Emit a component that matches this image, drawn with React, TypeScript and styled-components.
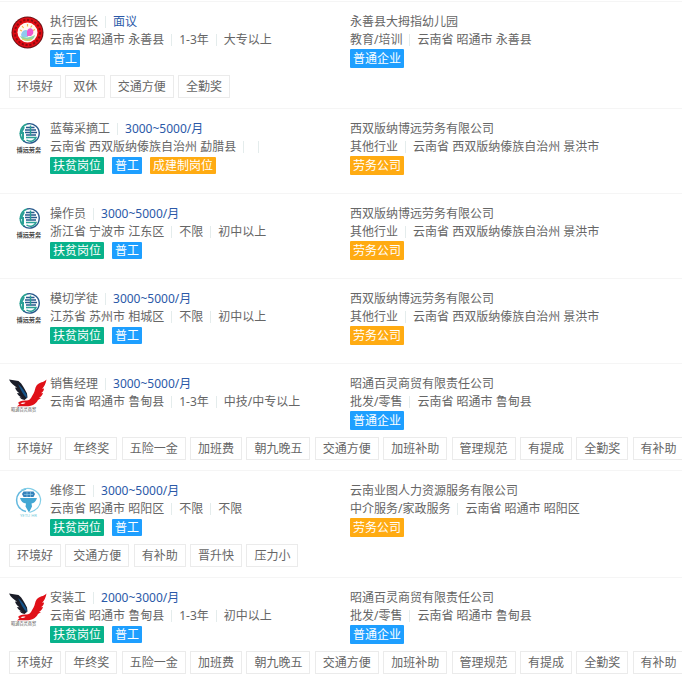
import React from "react";
import styled, { createGlobalStyle } from "styled-components";

type TagKind = "support" | "basic" | "agency";
type LogoKind = "kindergarten" | "boyuan" | "bailing" | "yetu";

interface TagData {
  label: string;
  kind: TagKind;
}

interface Job {
  logo: LogoKind;
  title: string;
  salary: string;
  facts: string[];
  tags: TagData[];
  company: string;
  companyFacts: string[];
  companyTag: TagData;
  benefits: string[];
}

const tagColors: Record<TagKind, string> = {
  support: "#08b28b",
  basic: "#1e9fff",
  agency: "#ffab12",
};

const GlobalStyle = createGlobalStyle`
  body {
    margin: 0;
    background: #fff;
    color: #666;
    font-family: "Noto Sans", "Noto Sans CJK SC", sans-serif;
    font-size: 12px;
    line-height: 18px;
    overflow-x: hidden;
  }
`;

const List = styled.ul`
  list-style: none;
  margin: 0;
  padding: 1px 0 0;
`;

const Row = styled.li`
  border-top: 1px solid #f5f5f5;
  padding: 11px 0 10px;
`;

const Columns = styled.div`
  display: grid;
  grid-template-columns: 1fr 1fr;
`;

const Position = styled.div`
  display: flex;
  gap: 3px;
  padding-left: 9px;
  white-space: nowrap;
`;

const Company = styled.div`
  padding-left: 9px;
  white-space: nowrap;
`;

const LogoImage = styled.svg`
  display: block;
  flex: none;
  width: 38px;
  height: 38px;
`;

const Line = styled.div`
  display: flex;
  align-items: center;
  height: 18px;
`;

const Divider = styled.span`
  width: 1px;
  height: 12px;
  margin: 0 7px;
  background: #e4ecec;
`;

const TextLink = styled.a<{ $accent?: boolean }>`
  color: ${(p) => (p.$accent ? "#2b59a8" : "inherit")};
  text-decoration: none;
`;

const TagLine = styled(Line)`
  gap: 8px;
`;

const Tag = styled.span<{ $kind: TagKind; $tall?: boolean }>`
  padding: 0 3px;
  border-radius: 1px;
  background: ${(p) => tagColors[p.$kind]};
  color: #fff;
  line-height: ${(p) => (p.$tall ? 19 : 17)}px;
`;

const Benefits = styled.div`
  margin-top: 8px;
  padding-left: 9px;
  height: 23px;
  overflow: hidden;
  white-space: nowrap;
  font-family: "Liberation Sans", "Noto Sans CJK SC", sans-serif;
`;

const Benefit = styled.span`
  display: inline-block;
  box-sizing: border-box;
  height: 23px;
  margin-right: 1px;
  padding: 0 7px;
  border: 1px solid #ebebeb;
  line-height: 23px;
  vertical-align: top;
`;

const Spacer = styled.div`
  height: 9px;
`;

function Kindergarten() {
  return (
    <LogoImage viewBox="0 0 38 38" aria-label="永善县大拇指幼儿园">
      <circle cx="18.5" cy="19.5" r="16" fill="#6b1216" />
      <circle cx="18.5" cy="19.5" r="15" fill="#e00c14" />
      <circle cx="18.5" cy="19.5" r="12.6" fill="none" stroke="#8d0a10" strokeWidth="2" strokeDasharray="2.2 1.7" />
      <circle cx="18.5" cy="19.5" r="10" fill="#fff8f2" />
      <path d="M11 17l2 1M13 13l1.600 2M18.500 11v2.400M23 12.500l-1.400 2M26 16.500l-2 1" stroke="#f3b64a" strokeWidth="1.200" />
      <path d="M12 22c1-4 3-5 5-5 1.500 0 2 2 1 3l1 4h-6z" fill="#8fc9ee" />
      <path d="M18 18c1-3 4-4 6-1 1 3 0 4-2 6h-4z" fill="#ee58cf" />
      <path d="M11 23c5 2 10 2 15-1-1 4-4 6-7.500 6s-6-2-7.500-5z" fill="#8ed7a8" />
      <path d="M13 26c4 1.500 7 1.500 10 0" stroke="#f2ce54" strokeWidth="1" fill="none" />
    </LogoImage>
  );
}

function Boyuan() {
  return (
    <LogoImage viewBox="0 0 38 38" aria-label="博远劳务">
      <path d="M18 4A10 10 0 0 0 15.500 21.500" fill="none" stroke="#28a092" strokeWidth="1.700" />
      <path d="M18 4A9.700 9.700 0 1 1 14.500 21" fill="none" stroke="#27598c" strokeWidth="1.400" />
      <path d="M15 7l-3 6h2v6" fill="none" stroke="#2aa096" strokeWidth="2" />
      <path d="M17 7.500h8.500M16 10h11M16 12.500h12M17 15h10" stroke="#27598c" strokeWidth="1.300" />
      <path d="M21.500 5.500v10" stroke="#2aa096" strokeWidth="1.400" />
      <path d="M17 17.500h10c-1 3.500-6 5-9.500 2.500" fill="none" stroke="#2aa096" strokeWidth="1.500" />
      <text x="7.500" y="31.500" fontSize="6.200" fontWeight="600" fill="#444">博远劳务</text>
      <path d="M8 33h24" stroke="#999" strokeWidth="0.800" strokeDasharray="1.500 .5" />
    </LogoImage>
  );
}

function Bailing() {
  return (
    <LogoImage viewBox="0 0 38 38" aria-label="昭通百灵商贸">
      <path d="M0 4.500l9.500 1.500c4 3 6 8 8.500 12.500l.5 4-3 2.500c-2.500-.5-4-1.500-5-3l2.500.4c-2.500-1-4-2.500-5-4.500l2.500.4C8 16.500 6.500 14.500 6 12.500l2 .3C5 10.500 2 8.500 0 4.500z" fill="#1a1d28" />
      <path d="M9 9c4 3 6 7 8.500 10.500l.5 4C14 20 12 15 9 9z" fill="#16548a" />
      <path d="M37.500 4.500c-1.500 1.700-3 2.300-5 2.800-4 1.200-6 4-6.500 7.200-.5 3-2 5-4 8.500-1.500 2.500-4 2.500-6.500 2.500-3 0-5.500 1-6.500 2.500l1.500 1.200-2.500 2.300c5-.5 12 .5 16-1.500 2.500-1.200 4-3 5-5l3-2-2-.2c2.500-1.300 3.500-3 4-4.800l-2 .3c2-1.500 3-3 3-4.800l-1.800.3c2-2.200 3.500-5 4.300-9.300z" fill="#e01018" />
      <path d="M11.500 28.500c1.500-1.300 3.500-1.200 5-.7-1 1.200-3 1.500-5 .7z" fill="#fff" />
      <text x="2" y="36" fontSize="4.200" fill="#555">昭通百灵商贸</text>
    </LogoImage>
  );
}

function Yetu() {
  return (
    <LogoImage viewBox="0 0 38 38" aria-label="YETU HR">
      <path d="M17 29.500C4 26.500 5 9 17 7" fill="none" stroke="#64b9df" strokeWidth="1.500" />
      <path d="M12 8.500c8-5 18 0 19.500 8 .8 7-4 12-11 14" fill="none" stroke="#83cee7" strokeWidth="1.300" />
      <path d="M14.500 9.500h10l1.500 2.500-1.500 3h-10L13 12z" fill="#3482bb" />
      <path d="M11 16h17c-1 3.500-3 5-5.500 5.500l.5 3-3 6-3.500-6 .5-3c-3-.5-5-2-6-5.500z" fill="#43a7d3" />
      <path d="M15 12.500h9M18 10v5M21.500 10v5" stroke="#9bd0eb" strokeWidth=".6" />
      <text x="11" y="35" fontSize="4.200" fill="#7acbdc">YETU HR</text>
    </LogoImage>
  );
}

const logos: Record<LogoKind, () => React.ReactElement> = {
  kindergarten: Kindergarten,
  boyuan: Boyuan,
  bailing: Bailing,
  yetu: Yetu,
};

const support: TagData = { label: "扶贫岗位", kind: "support" };
const worker: TagData = { label: "普工", kind: "basic" };
const team: TagData = { label: "成建制岗位", kind: "agency" };
const ordinary: TagData = { label: "普通企业", kind: "basic" };
const labor: TagData = { label: "劳务公司", kind: "agency" };

const boyuan = {
  logo: "boyuan" as const,
  company: "西双版纳博远劳务有限公司",
  companyFacts: ["其他行业", "云南省 西双版纳傣族自治州 景洪市"],
  companyTag: labor,
  benefits: [],
};

const bailing = {
  logo: "bailing" as const,
  company: "昭通百灵商贸有限责任公司",
  companyFacts: ["批发/零售", "云南省 昭通市 鲁甸县"],
  companyTag: ordinary,
  benefits: ["环境好", "年终奖", "五险一金", "加班费", "朝九晚五", "交通方便", "加班补助", "管理规范", "有提成", "全勤奖", "有补助"],
};

const jobs: Job[] = [
  {
    logo: "kindergarten",
    title: "执行园长",
    salary: "面议",
    facts: ["云南省 昭通市 永善县", "1-3年", "大专以上"],
    tags: [worker],
    company: "永善县大拇指幼儿园",
    companyFacts: ["教育/培训", "云南省 昭通市 永善县"],
    companyTag: ordinary,
    benefits: ["环境好", "双休", "交通方便", "全勤奖"],
  },
  { ...boyuan, title: "蓝莓采摘工", salary: "3000~5000/月", facts: ["云南省 西双版纳傣族自治州 勐腊县", "", ""], tags: [support, worker, team] },
  { ...boyuan, title: "操作员", salary: "3000~5000/月", facts: ["浙江省 宁波市 江东区", "不限", "初中以上"], tags: [support, worker] },
  { ...boyuan, title: "模切学徒", salary: "3000~5000/月", facts: ["江苏省 苏州市 相城区", "不限", "初中以上"], tags: [support, worker] },
  { ...bailing, title: "销售经理", salary: "3000~5000/月", facts: ["云南省 昭通市 鲁甸县", "1-3年", "中技/中专以上"], tags: [] },
  {
    logo: "yetu",
    title: "维修工",
    salary: "3000~5000/月",
    facts: ["云南省 昭通市 昭阳区", "不限", "不限"],
    tags: [support, worker],
    company: "云南业图人力资源服务有限公司",
    companyFacts: ["中介服务/家政服务", "云南省 昭通市 昭阳区"],
    companyTag: labor,
    benefits: ["环境好", "交通方便", "有补助", "晋升快", "压力小"],
  },
  { ...bailing, title: "安装工", salary: "2000~3000/月", facts: ["云南省 昭通市 鲁甸县", "1-3年", "初中以上"], tags: [support, worker] },
];

function Facts({ items }: { items: string[] }) {
  return (
    <Line>
      {items.map((item, i) => (
        <React.Fragment key={i}>
          {i > 0 && <Divider />}
          <span>{item}</span>
        </React.Fragment>
      ))}
    </Line>
  );
}

function JobRow({ job }: { job: Job }) {
  const Logo = logos[job.logo];
  return (
    <Row>
      <Columns>
        <Position>
          <Logo />
          <div>
            <Line>
              <TextLink href="#job">{job.title}</TextLink>
              <Divider />
              <TextLink href="#job" $accent>{job.salary}</TextLink>
            </Line>
            <Facts items={job.facts} />
            <TagLine>
              {job.tags.map((tag) => (
                <Tag key={tag.label} $kind={tag.kind}>{tag.label}</Tag>
              ))}
            </TagLine>
          </div>
        </Position>
        <Company>
          <Line>
            <TextLink href="#company">{job.company}</TextLink>
          </Line>
          <Facts items={job.companyFacts} />
          <TagLine>
            <Tag $kind={job.companyTag.kind} $tall>{job.companyTag.label}</Tag>
          </TagLine>
        </Company>
      </Columns>
      {job.benefits.length > 0 ? (
        <Benefits>
          {job.benefits.map((benefit) => (
            <React.Fragment key={benefit}>
              <Benefit>{benefit}</Benefit>{" "}
            </React.Fragment>
          ))}
        </Benefits>
      ) : (
        <Spacer />
      )}
    </Row>
  );
}

export default function App() {
  return (
    <>
      <GlobalStyle />
      <List>
        {jobs.map((job, i) => (
          <JobRow key={i} job={job} />
        ))}
      </List>
    </>
  );
}
